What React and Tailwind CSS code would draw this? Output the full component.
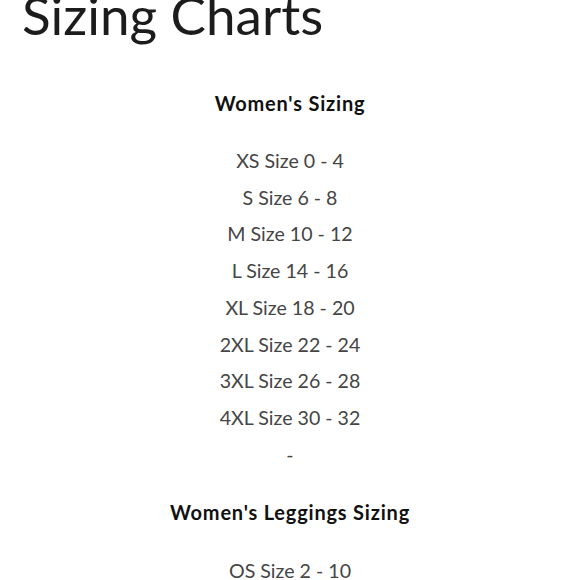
const womens = [
  'XS Size 0 - 4',
  'S Size 6 - 8',
  'M Size 10 - 12',
  'L Size 14 - 16',
  'XL Size 18 - 20',
  '2XL Size 22 - 24',
  '3XL Size 26 - 28',
  '4XL Size 30 - 32',
  '-',
];

export default function App() {
  return (
    <div className="h-[580px] w-[580px] overflow-hidden bg-white font-['Lato',sans-serif]">
      <h1 className="-mt-[15px] pl-[22px] text-[53px] leading-[60px] font-normal text-[#1c1c1c]">
        Sizing Charts
      </h1>
      <div className="mt-[44px] flex flex-col items-center text-center">
        <h2 className="text-[20px] leading-[28px] font-bold tracking-[0.8px] text-[#111]">Women's Sizing</h2>
        <div className="mt-[26px] text-[19.6px] leading-[36.7px] text-[#454545]">
          {womens.map((s) => (
            <div key={s}>{s}</div>
          ))}
        </div>
        <h2 className="mt-[25px] text-[20px] leading-[28px] font-bold tracking-[0.8px] text-[#111]">
          Women's Leggings Sizing
        </h2>
        <div className="mt-[27px] text-[19.6px] leading-[36.7px] text-[#454545]">OS Size 2 - 10</div>
      </div>
    </div>
  );
}
